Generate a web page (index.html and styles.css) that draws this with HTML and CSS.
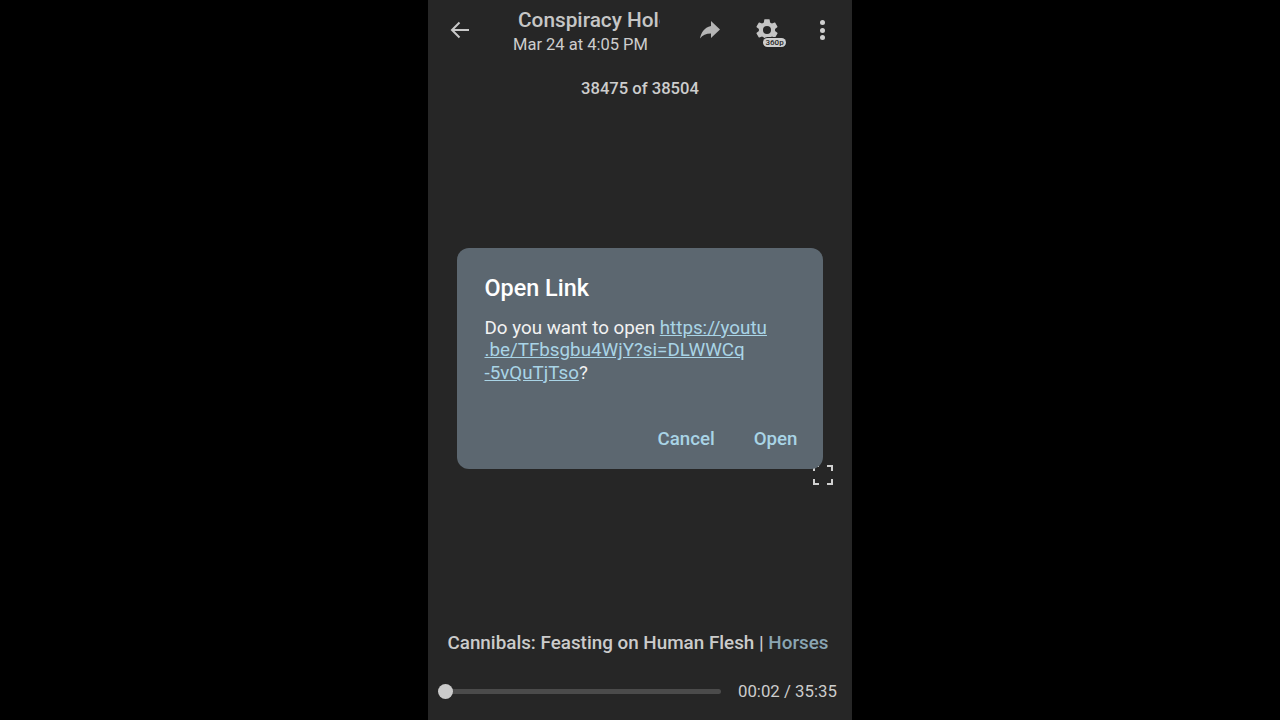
FILE: index.html
```html
<!DOCTYPE html>
<html lang="en">
<head>
    <meta charset="UTF-8">
    <title>Open Link</title>
    <link rel="stylesheet" href="styles.css">
</head>
<body>
    <div class="phone">
        <header class="topbar">
            <button class="icon-btn back">
                <svg width="24" height="24" viewBox="0 0 24 24"><path d="M21 12H4.500M11.500 4.500 4 12l7.500 7.500" fill="none" stroke="#c9c9c9" stroke-width="2"/></svg>
            </button>
            <div class="title-block">
                <div class="title">Conspiracy Hole</div>
                <div class="date">Mar 24 at 4:05 PM</div>
            </div>
            <button class="icon-btn share">
                <svg width="24" height="24" viewBox="0 0 24 24"><path d="M13 3 22 11.500 13 20V15.500C8 15.500 4.500 17 2 20.500 3 15 6 9.500 13 8z" fill="#b5b5b5"/></svg>
            </button>
            <button class="icon-btn gear">
                <svg width="26" height="26" viewBox="0 0 24 24"><path fill="#c4c4c4" fill-rule="evenodd" d="M19.400 13c.04-.33.060-.66.060-1s-.02-.67-.060-1l2.100-1.650c.19-.15.24-.42.12-.64l-2-3.460c-.12-.22-.38-.3-.61-.22l-2.490 1a7.300 7.300 0 0 0-1.690-.98l-.38-2.650A.5.500 0 0 0 14 2h-4a.5.500 0 0 0-.49.42l-.38 2.650c-.61.25-1.170.59-1.690.98l-2.490-1a.5.500 0 0 0-.61.22l-2 3.460c-.13.22-.07.49.12.64L4.560 11a8 8 0 0 0 0 2l-2.100 1.650a.5.500 0 0 0-.12.64l2 3.460c.12.22.38.3.61.22l2.490-1c.52.4 1.080.73 1.690.98l.38 2.650c.03.24.24.42.49.42h4c.25 0 .46-.18.49-.42l.38-2.650c.61-.25 1.170-.59 1.690-.98l2.490 1c.23.08.49 0 .61-.22l2-3.460a.5.500 0 0 0-.12-.64zM12 15.700a3.700 3.700 0 1 1 0-7.400 3.700 3.700 0 0 1 0 7.400z"/></svg>
                <span class="quality">360p</span>
            </button>
            <button class="icon-btn more">
                <span class="dot"></span>
                <span class="dot"></span>
                <span class="dot"></span>
            </button>
        </header>

        <div class="counter">38475 of 38504</div>

        <div class="spacer"></div>

        <div class="caption">Cannibals: Feasting on Human Flesh | <span class="tag">Horses</span></div>

        <div class="seek-row">
            <div class="track"><span class="thumb"></span></div>
            <div class="time">00:02 / 35:35</div>
        </div>

        <button class="fullscreen">
            <svg width="20" height="20" viewBox="0 0 20 20"><path d="M1 6V1h5M14 1h5v5M19 14v5h-5M6 19H1v-5" fill="none" stroke="#d0d0d0" stroke-width="2"/></svg>
        </button>

        <div class="dialog">
            <h2>Open Link</h2>
            <p>Do you want to open <a href="#">https://youtu<br>.be/TFbsgbu4WjY?si=DLWWCq<br>-5vQuTjTso</a>?</p>
            <div class="actions">
                <button>Cancel</button>
                <button>Open</button>
            </div>
        </div>
    </div>
</body>
</html>
```

FILE: styles.css
```css
html, body {
    height: 100%;
}

body {
    margin: 0;
    background: #000;
    display: flex;
    justify-content: center;
    font-family: Roboto, "Liberation Sans", sans-serif;
    color: #cfcfcf;
    overflow: hidden;
}

button {
    background: none;
    border: none;
    padding: 0;
    font-family: inherit;
    cursor: pointer;
}

.phone {
    position: relative;
    width: 424px;
    height: 720px;
    background: #262626;
    display: flex;
    flex-direction: column;
}

.topbar {
    display: flex;
    align-items: flex-start;
    height: 78px;
    flex-shrink: 0;
}

.icon-btn {
    display: flex;
    align-items: center;
    justify-content: center;
    position: relative;
    margin-top: 18px;
    height: 24px;
    flex-shrink: 0;
}

.back {
    margin-left: 20px;
    width: 24px;
}

.title-block {
    width: 147px;
    margin-left: 41px;
    margin-top: 8px;
    flex-shrink: 0;
}

.title {
    width: 142px;
    margin-left: 5px;
    overflow: hidden;
    white-space: nowrap;
    font-size: 20.800px;
    font-weight: 500;
    line-height: 24px;
    color: #c6c6c6;
}

.date {
    font-size: 16.500px;
    line-height: 20px;
    margin-top: 3px;
    color: #cdcdcd;
    white-space: nowrap;
}

.share {
    margin-left: 38px;
    width: 24px;
}

.gear {
    margin-left: 32px;
    width: 26px;
}

.quality {
    position: absolute;
    left: 9px;
    top: 20px;
    background: #cfcfcf;
    color: #262626;
    font-size: 8px;
    font-weight: 500;
    line-height: 9px;
    padding: 0 2.500px;
    border-radius: 5px;
    box-shadow: 0 0 0 1px #262626;
}

.more {
    margin-left: 30.500px;
    width: 24px;
    flex-direction: column;
    gap: 2.500px;
}

.dot {
    width: 5px;
    height: 5px;
    border-radius: 50%;
    background: #cfcfcf;
}

.counter {
    text-align: center;
    font-size: 16.600px;
    font-weight: 500;
    line-height: 22px;
    color: #cdcdcd;
}

.spacer {
    flex: 1;
}

.caption {
    text-align: center;
    font-size: 18.840px;
    font-weight: 500;
    line-height: 24px;
    color: #cbcbcb;
    white-space: nowrap;
    padding-right: 4px;
}

.tag {
    color: #8aa5b3;
}

.seek-row {
    display: flex;
    align-items: center;
    height: 24px;
    margin: 24px 0 17px;
    padding-left: 17px;
}

.track {
    position: relative;
    width: 276px;
    height: 5px;
    border-radius: 3px;
    background: #4b4b4b;
}

.thumb {
    position: absolute;
    left: -7px;
    top: -5px;
    width: 15px;
    height: 15px;
    border-radius: 50%;
    background: #cbcbcb;
}

.time {
    margin-left: 17px;
    font-size: 16.800px;
    color: #cdcdcd;
    white-space: nowrap;
}

.fullscreen {
    position: absolute;
    left: 385px;
    top: 465px;
    width: 20px;
    height: 20px;
    display: block;
}

.fullscreen svg {
    display: block;
}

.dialog {
    position: absolute;
    left: 28.500px;
    top: 248px;
    width: 366px;
    height: 221px;
    box-sizing: border-box;
    padding: 24px 25px 0 28px;
    background: #5c6770;
    border-radius: 12px;
    color: #fff;
}

.dialog h2 {
    margin: 0;
    font-size: 23.400px;
    font-weight: 500;
    line-height: 32px;
}

.dialog p {
    margin: 13px 0 0;
    font-size: 18.800px;
    line-height: 22.300px;
    color: #f2f2f2;
    white-space: nowrap;
}

.dialog a {
    color: #a9d4e6;
}

.actions {
    display: flex;
    justify-content: flex-end;
    gap: 39px;
    margin-top: 43px;
}

.actions button {
    font-size: 18.700px;
    font-weight: 500;
    line-height: 24px;
    color: #a9d4e6;
}
```
